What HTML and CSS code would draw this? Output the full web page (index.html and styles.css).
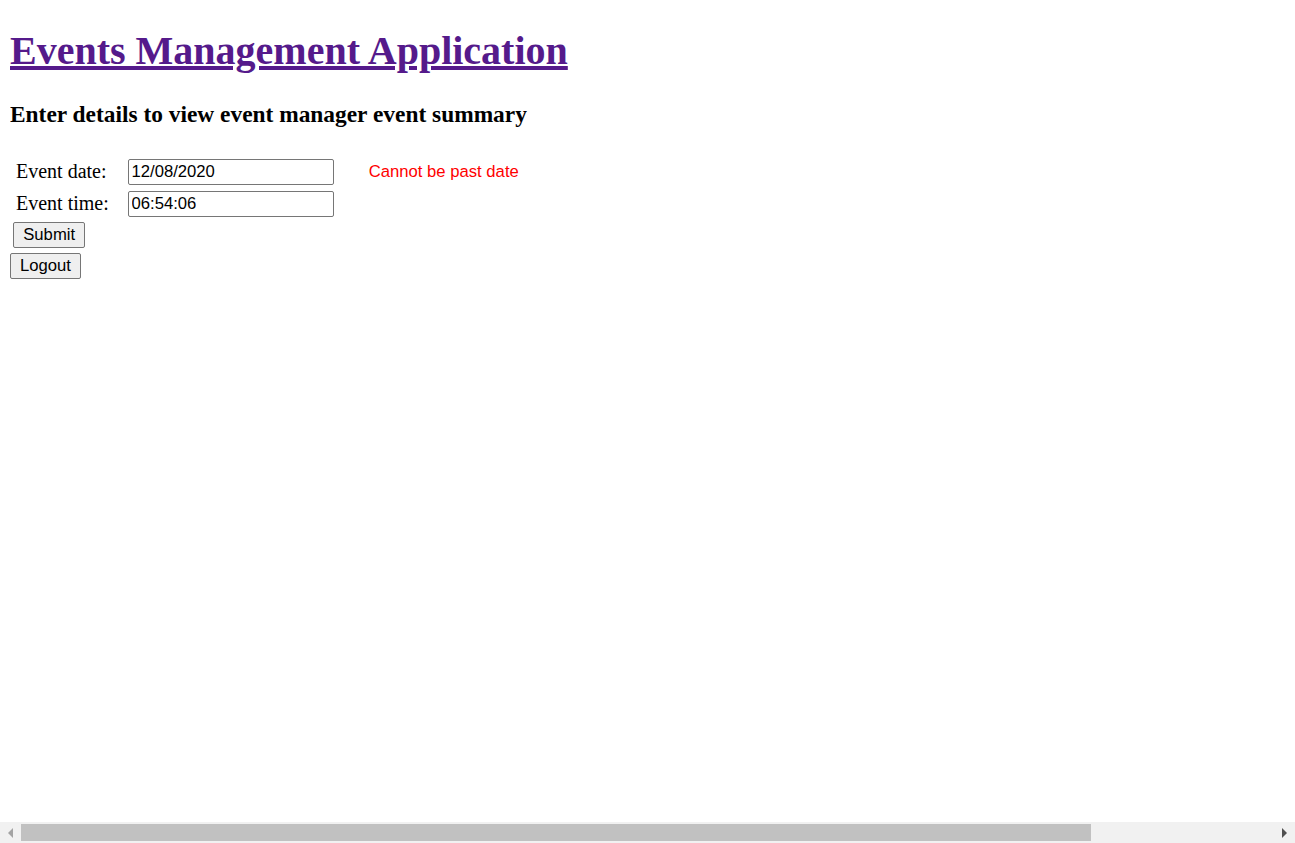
FILE: index.html
```html
<!DOCTYPE html>
<html>
<head>
<meta charset="utf-8">
<title>Events Management Application</title>
<link rel="stylesheet" href="styles.css">
</head>
<body class="page">
<h1 class="title"><a class="title-link" href="#">Events Management Application</a></h1>
<h3 class="subtitle">Enter details to view event manager event summary</h3>
<form class="event-form">
<table class="form-table">
<tr class="row-first">
<td class="label">Event date:</td>
<td class="field"><input class="text-input" type="text" value="12/08/2020"></td>
<td class="error">Cannot be past date</td>
</tr>
<tr>
<td class="label">Event time:</td>
<td class="field"><input class="text-input" type="text" value="06:54:06"></td>
<td class="error"></td>
</tr>
<tr>
<td class="actions" colspan="3"><button class="btn" type="button">Submit</button></td>
</tr>
</table>
</form>
<button class="btn btn-logout" type="button">Logout</button>
<div class="hscroll">
  <span class="arrow arrow-left"></span>
  <span class="track"><span class="thumb"></span></span>
  <span class="arrow arrow-right"></span>
</div>
</body>
</html>
```
FILE: styles.css
```css
.page {
  margin: 0 10px 10px;
  font-family: "Liberation Serif", "Times New Roman", serif;
  font-size: 20px;
  color: #000;
  background: #fff;
}
.title {
  font-size: 40px;
  font-weight: bold;
  margin: 26.8px 0;
}
.title-link {
  color: #551a8b;
}
.subtitle {
  font-size: 23.4px;
  font-weight: bold;
  margin: 23.4px 0;
}
.event-form {
  margin: 0;
  padding-top: 3px;
}
.form-table {
  border-spacing: 2px;
}
.form-table td {
  padding: 1.5px 1.25px;
}
.row-first {
  height: 31px;
}
.form-table .label {
  font-size: 20px;
  padding-left: 4px;
  width: 107px;
}
.text-input {
  font-family: "Liberation Sans", Arial, sans-serif;
  font-size: 16.67px;
  width: 206px;
  height: 26px;
  box-sizing: border-box;
  padding: 1px 3px;
  margin: 0;
  border: 1px solid #767676;
  border-radius: 2px;
  color: #000;
  vertical-align: middle;
}
.form-table .error {
  font-family: "Liberation Sans", Arial, sans-serif;
  font-size: 16.67px;
  color: #ff0000;
  padding-left: 32px;
  padding-top: 6px;
  vertical-align: top;
}
.btn {
  font-family: "Liberation Sans", Arial, sans-serif;
  font-size: 16.67px;
  height: 26px;
  box-sizing: border-box;
  padding: 1px 9px;
  margin: 0;
  background: #efefef;
  border: 1px solid #767676;
  border-radius: 2px;
  color: #000;
}
.btn-logout {
  margin-top: 1.5px;
}
.hscroll {
  position: fixed;
  left: 0;
  right: 0;
  bottom: 0;
  height: 21px;
  background: #f1f1f1;
  display: flex;
  align-items: center;
}
.arrow {
  width: 0;
  height: 0;
  border-top: 5px solid transparent;
  border-bottom: 5px solid transparent;
}
.arrow-left {
  border-right: 5px solid #a3a3a3;
  margin: 0 8px 0 8px;
}
.arrow-right {
  border-left: 5px solid #505050;
  margin: 0 8px 0 0;
}
.track {
  flex: 1;
  height: 17px;
  display: flex;
  align-items: center;
  margin-right: 191px;
}
.thumb {
  width: 1070px;
  height: 17px;
  background: #c1c1c1;
}
```
